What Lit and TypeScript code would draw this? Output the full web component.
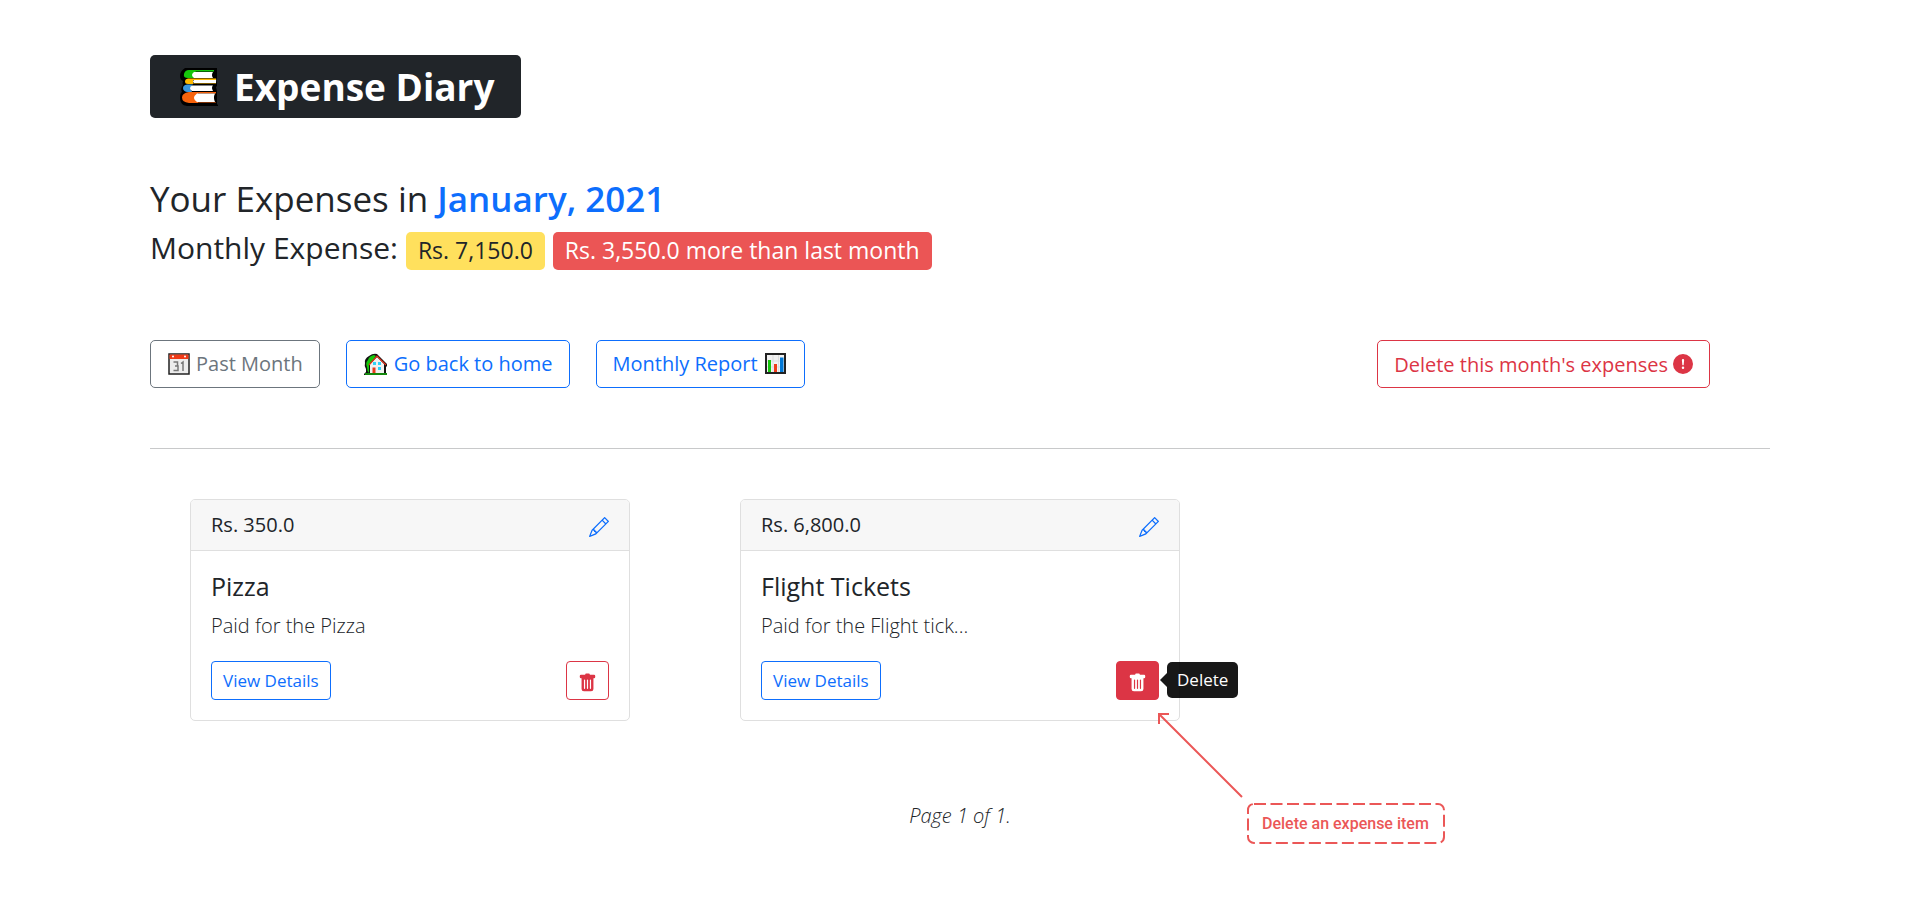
import { LitElement, html, css, svg } from "lit";
import { customElement, property } from "lit/decorators.js";

const books = svg`
  <path d="M5 0h32v10l-1 2 1 3v3l-1 1 1 4v13l1 1v1H7q-7-1-7-8 0-5 2-6-2-3 1-7-1-2 0-4-3-1-3-5 0-5 5-8z" fill="#000"/>
  <path d="M9 2h25v1.500H16q-4 2-2 6.500H8q-5 0-4-4 1-4 5-4z" fill="#16c60c"/><path d="M14 4h19q-2 3 0 6H14q-4-3 0-6z" fill="#fff"/>
  <path d="M8 10.500h28v1.500H13v3.500h23V16H8q-3 0-3-2.500t3-3z" fill="#ffb900"/><path d="M14 12h22v3H14q-2-1.500 0-3z" fill="#fff"/>
  <path d="M7 16.500h6q-4 3-1 7.500H7q-4-1-4-4t4-3.500z" fill="#3a96dd"/><path d="M12 17.500h21q-2 2 0 5.500H12q-4-3 0-5.500z" fill="#fff"/>
  <path d="M9 24h27v1.500H18v9h18V35H9q-7-1-7-5.500T9 24z" fill="#f7630c"/><path d="M17 25.500h18q-2 4 0 8.500H17q-6-4 0-8.500z" fill="#fff"/>`;

const calendar = svg`
  <rect x="1" y="1" width="20" height="20" fill="#ececec" stroke="#222" stroke-width="1.500"/>
  <rect x="1.500" y="1.500" width="19" height="4.500" fill="#f03a17"/>
  <circle cx="5" cy="3.500" r="1" fill="#fff"/><circle cx="17" cy="3.500" r="1" fill="#fff"/>
  <path d="M5.500 9h4v4H7h3v4.500H5.500M13 10.500l2-1.500v9" fill="none" stroke="#777" stroke-width="1.500"/>`;

const house = svg`
  <path d="M0 22v-1l2-2v-3Q0 13 1 10q-1-4 4-7 4-3 8-2l10 10v2l-1 1v6l1 2z" fill="#111"/>
  <path d="M3 14q-2-4 1-7 1-4 6-5l2 1-7 9v8q-2-2-2-6z" fill="#16c60c"/>
  <path d="M6 11l7-7 7 7v9H6z" fill="#f2f2f2"/>
  <path d="M5 12l8-9 9 9" fill="none" stroke="#e32f1b" stroke-width="1.200"/>
  <path d="M9 9h3v3H9zM14 9h3v3h-3zM14 14h3v3h-3z" fill="#31d2f7"/>
  <path d="M8.500 14.500h3V20h-3z" fill="#e83b1c"/><path d="M1 20h22v2H1z" fill="#13880c"/>`;

const chart = svg`
  <rect x="1" y="1" width="19" height="19" fill="#f2f2f2" stroke="#222" stroke-width="2"/>
  <path d="M8 2v17M13.500 2v17M2 8h17M2 14h17" stroke="#ddd" stroke-width="1"/>
  <path d="M3 7h3v12H3z" fill="#16c60c"/><path d="M9 11h3v8H9z" fill="#f03a17"/><path d="M15 4.500h3.500V19H15z" fill="#0078d7"/>`;

const alertIcon = svg`<path d="M16 8A8 8 0 1 1 0 8a8 8 0 0 1 16 0zM8 4a.905.905 0 0 0-.9.995l.35 3.507a.552.552 0 0 0 1.100 0l.35-3.507A.905.905 0 0 0 8 4zm.002 6a1 1 0 1 0 0 2 1 1 0 0 0 0-2z"/>`;
const pencil = svg`<path d="M12.146.146a.5.5 0 0 1 .708 0l3 3a.5.5 0 0 1 0 .708l-10 10a.5.5 0 0 1-.168.110l-5 2a.5.5 0 0 1-.65-.65l2-5a.5.5 0 0 1 .110-.168l10-10zM11.207 2.500 13.500 4.793 14.793 3.500 12.500 1.207 11.207 2.500zm1.586 3L10.500 3.207 4 9.707V10h.5a.5.5 0 0 1 .5.5v.5h.5a.5.5 0 0 1 .5.5v.5h.293l6.500-6.500zm-9.761 5.175-.106.106-1.528 3.821 3.821-1.528.106-.106A.5.5 0 0 1 5 12.500V12h-.5a.5.5 0 0 1-.5-.5V11h-.5a.5.5 0 0 1-.468-.325z"/>`;
const trash = svg`<path d="M2.500 1a1 1 0 0 0-1 1v1a1 1 0 0 0 1 1H3v9a2 2 0 0 0 2 2h6a2 2 0 0 0 2-2V4h.5a1 1 0 0 0 1-1V2a1 1 0 0 0-1-1H10a1 1 0 0 0-1-1H7a1 1 0 0 0-1 1H2.500zm3 4a.5.5 0 0 1 .5.5v7a.5.5 0 0 1-1 0v-7a.5.5 0 0 1 .5-.5zM8 5a.5.5 0 0 1 .5.5v7a.5.5 0 0 1-1 0v-7A.5.5 0 0 1 8 5zm3 .5v7a.5.5 0 0 1-1 0v-7a.5.5 0 0 1 1 0z"/>`;

const controls = css`
  * { box-sizing: border-box; }
  svg { display: block; flex: none; }
  .btn {
    display: inline-flex; align-items: center; justify-content: center;
    border: 1px solid currentColor; border-radius: 5px;
    background: #fff; font-family: inherit; font-weight: 400;
    text-decoration: none; white-space: nowrap; cursor: pointer;
  }
  .primary { color: #0d6efd; }
  .secondary { color: #6c757d; }
  .danger { color: #dc3545; }
`;

@customElement("expense-card")
class ExpenseCard extends LitElement {
  @property() amount = "";
  @property() name = "";
  @property() note = "";
  @property({ type: Boolean }) highlighted = false;

  static styles = [controls, css`
    :host { display: block; }
    .card { border: 1px solid #dfdfdf; border-radius: 5px; background: #fff; }
    .head {
      display: flex; align-items: center; justify-content: space-between;
      padding: 10px 20px; line-height: 30px; background: #f7f7f7;
      border-bottom: 1px solid #dfdfdf; border-radius: 4px 4px 0 0;
    }
    .edit { color: #0d6efd; padding-top: 4px; }
    .body { padding: 20px; }
    .name { margin: 0 0 10px; font-size: 25px; line-height: 30px; font-weight: 400; }
    .note { margin: 0 0 20px; font-weight: 300; line-height: 30px; }
    .actions { display: flex; justify-content: space-between; }
    .small { height: 39px; padding: 0 11px; font-size: 17px; border-radius: 4px; }
    .delete { position: relative; display: flex; }
    .icon-only { padding: 4px 11px 0; }
    .filled { background: #dc3545; border-color: #dc3545; color: #fff; }
    .tip {
      position: absolute; left: calc(100% + 8px); top: 1px;
      padding: 5px 10px; border-radius: 5px; background: #000; opacity: 0.9;
      color: #fff; font-size: 17px; line-height: 26px;
    }
    .tip::before {
      content: ""; position: absolute; right: 100%; top: 11px;
      border: solid transparent; border-width: 7px 7px 7px 0; border-right-color: #000;
    }
    .arrow { position: absolute; left: calc(100% - 2px); top: calc(100% + 12px); }
    .callout {
      position: absolute; left: calc(100% + 88px); top: calc(100% + 103px);
      padding: 0 15px; white-space: nowrap;
      color: #eb5757; font: 500 16px/41px Roboto, sans-serif;
    }
    .frame { position: absolute; inset: 0; width: 100%; height: 100%; overflow: visible; }
  `];

  render() {
    return html`
      <article class="card">
        <div class="head">
          <span>${this.amount}</span>
          <a class="edit" href="#" aria-label="Edit"><svg width="20" height="20" viewBox="0 0 16 16" fill="currentColor">${pencil}</svg></a>
        </div>
        <div class="body">
          <h5 class="name">${this.name}</h5>
          <p class="note">${this.note}</p>
          <div class="actions">
            <a class="btn small primary" href="#">View Details</a>
            <div class="delete">
              <button class="btn small icon-only danger ${this.highlighted ? "filled" : ""}" aria-label="Delete">
                <svg width="19" height="20" viewBox="0 0 16 16" fill="currentColor">${trash}</svg>
              </button>
              ${this.highlighted ? html`
                <span class="tip" role="tooltip">Delete</span>
                <svg class="arrow" width="86" height="86" viewBox="0 0 86 86" fill="none" stroke="#eb5757" stroke-width="2">
                  <path d="M2 12V2h10M2 2l83 83"/>
                </svg>
                <span class="callout">
                  <svg class="frame"><rect x="1" y="1" width="196" height="39" rx="6" fill="none" stroke="#eb5757" stroke-width="2" stroke-dasharray="12 4.500"/></svg>
                  Delete an expense item
                </span>` : ""}
            </div>
          </div>
        </div>
      </article>`;
  }
}

@customElement("app-root")
class AppRoot extends LitElement {
  static styles = [controls, css`
    :host {
      display: block; padding: 55px 150px; color: #212529; background: #fff;
      font-family: "Open Sans", "Noto Sans", sans-serif; font-size: 20px; line-height: 30px;
    }
    .brand {
      display: inline-flex; align-items: center; gap: 16px; margin: 0;
      padding: 5px 27px 5px 30px; border-radius: 5px; background: #212529;
      color: #fff; font-size: 37px; line-height: 53px; font-weight: 700;
    }
    .heading { margin: 60px 0 10px; font-size: 35px; line-height: 42px; font-weight: 400; }
    .month { color: #0d6efd; font-weight: 600; }
    .summary {
      display: flex; align-items: baseline; gap: 8px; margin: 0 0 70px;
      font-size: 30px; line-height: 36px; font-weight: 400;
    }
    .badge { padding: 5px 12px 7px; border-radius: 5px; font-size: 23px; line-height: 26px; }
    .total { background: #ffe05d; }
    .diff { background: #eb5555; color: #fff; }
    .toolbar { display: flex; gap: 26px; padding-right: 60px; }
    .large { height: 48px; padding: 0 16px; gap: 5px; font-size: 20px; }
    .push { margin-left: auto; }
    .rule { height: 1px; margin: 60px 0 50px; border: 0; background: #c8c9ca; }
    .cards { display: grid; grid-template-columns: repeat(3, 1fr); gap: 110px; padding: 0 40px; }
    .page { margin: 80px 0 0; text-align: center; font-style: italic; font-weight: 300; }
  `];

  render() {
    return html`
      <h1 class="brand"><svg width="38" height="38" viewBox="0 0 38 38">${books}</svg>Expense Diary</h1>
      <h2 class="heading">Your Expenses in <span class="month">January, 2021</span></h2>
      <h3 class="summary">
        <span>Monthly Expense:</span>
        <span class="badge total">Rs. 7,150.0</span>
        <span class="badge diff">Rs. 3,550.0 more than last month</span>
      </h3>
      <nav class="toolbar">
        <a class="btn large secondary" href="#"><svg width="24" height="22" viewBox="-1 0 24 22">${calendar}</svg>Past Month</a>
        <a class="btn large primary" href="#"><svg width="26" height="23" viewBox="-1 0 26 23">${house}</svg>Go back to home</a>
        <a class="btn large primary" href="#">Monthly Report<svg width="25" height="22" viewBox="-2 0 25 22">${chart}</svg></a>
        <button class="btn large danger push">Delete this month's expenses<svg width="20" height="20" viewBox="0 0 16 16" fill="currentColor">${alertIcon}</svg></button>
      </nav>
      <hr class="rule">
      <section class="cards">
        <expense-card amount="Rs. 350.0" name="Pizza" note="Paid for the Pizza"></expense-card>
        <expense-card amount="Rs. 6,800.0" name="Flight Tickets" note="Paid for the Flight tick..." highlighted></expense-card>
      </section>
      <p class="page">Page 1 of 1.</p>`;
  }
}
